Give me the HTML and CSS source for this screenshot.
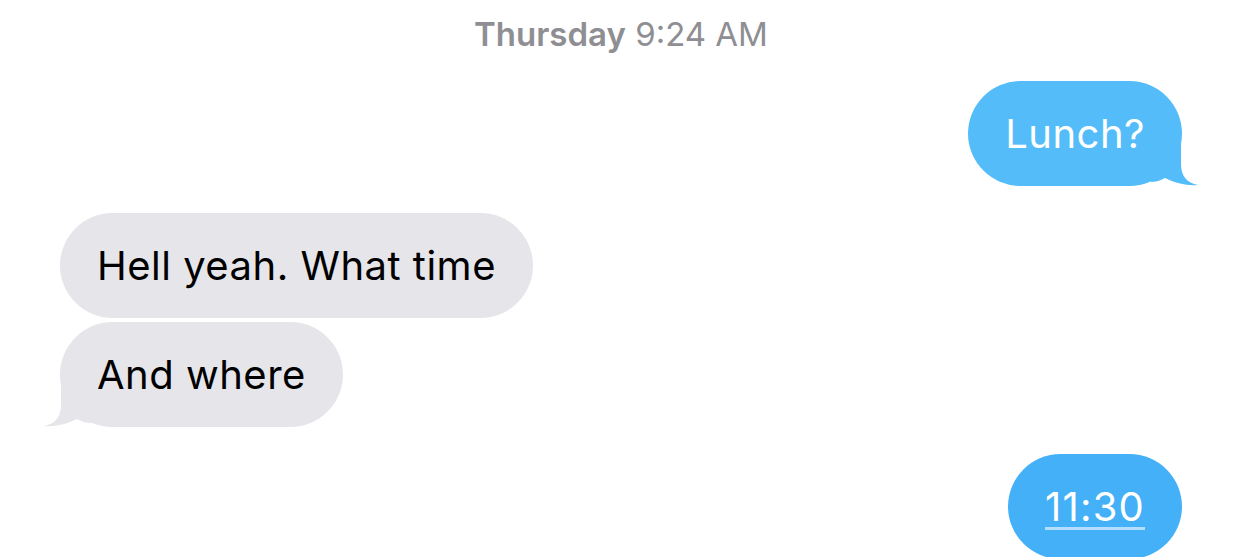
FILE: index.html
```html
<!doctype html>
<html lang="en">
<head>
<meta charset="UTF-8">
<title>Messages</title>
<meta name="viewport" content="width=device-width,initial-scale=1">
<link rel="stylesheet" href="styles.css">
</head>
<body>
<div class="thread">

 <div class="stamp"><b>Thursday</b> 9:24 AM</div>

 <div class="bubble sent first">
  Lunch?
  <svg class="tail" width="48" height="50" viewBox="0 0 48 50"><path d="M22 0 H30 V28 C30 40 36 47 47 49 C36 50 24 47 14 42 C8 45 4 46 0 46 V0 Z"/></svg>
 </div>

 <div class="bubble got gap">Hell yeah. What time</div>
 <div class="bubble got near">
  And where
  <svg class="tail" width="48" height="50" viewBox="0 0 48 50"><path d="M22 0 H30 V28 C30 40 36 47 47 49 C36 50 24 47 14 42 C8 45 4 46 0 46 V0 Z"/></svg>
 </div>

 <div class="bubble sent last gap"><span class="link">11:30</span></div>

</div>
</body>
</html>
```

FILE: styles.css
```css
body {
    margin: 0;
    background: #ffffff;
    font-family: Inter, "Liberation Sans", sans-serif;
}
.thread {
    display: flex;
    flex-direction: column;
    padding: 0 60px;
}
.stamp {
    align-self: center;
    padding-top: 16px;
    line-height: 36px;
    font-size: 33px;
    color: #8e8e93;
}
.stamp b {
    font-weight: 600;
}
.bubble {
    position: relative;
    display: flex;
    align-items: center;
    height: 105px;
    box-sizing: border-box;
    padding: 0 37px;
    border-radius: 53px;
    font-size: 40px;
    letter-spacing: 0.5px;
}
.sent {
    align-self: flex-end;
    color: #ffffff;
}
.got {
    align-self: flex-start;
    background: #e5e5ea;
    color: #000000;
}
.first {
    margin-top: 29px;
    background: #54bdf9;
}
.last {
    background: #44b0f8;
}
.gap {
    margin-top: 27px;
}
.near {
    margin-top: 4px;
}
.tail {
    position: absolute;
    bottom: 0;
}
.sent .tail {
    right: -17px;
}
.first .tail path {
    fill: #54bdf9;
}
.got .tail {
    left: -17px;
    transform: scaleX(-1);
}
.got .tail path {
    fill: #e5e5ea;
}
.link {
    letter-spacing: 1.2px;
    text-decoration: underline;
    text-decoration-color: rgba(255, 255, 255, 0.6);
    text-decoration-thickness: 3px;
    text-underline-offset: 6px;
}
```
